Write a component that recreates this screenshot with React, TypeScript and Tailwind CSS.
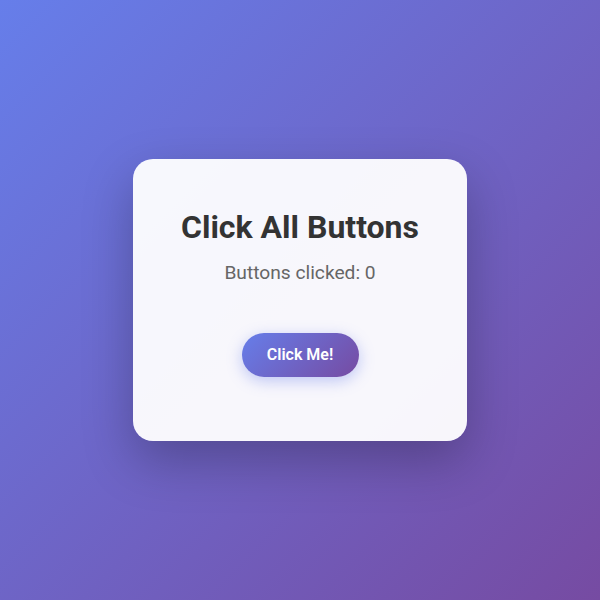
export default function App() {
  return (
    <div className="flex min-h-screen items-center justify-center bg-[linear-gradient(135deg,#667eea_0%,#764ba2_100%)] font-['Roboto',sans-serif]">
      <div className="flex w-[334px] flex-col items-center rounded-[20px] bg-white/95 px-10 pb-16 pt-[49px] text-center shadow-[0_20px_50px_rgba(0,0,0,0.25)]">
        <h1 className="text-[32px] font-bold leading-[38px] text-[#333]">Click All Buttons</h1>
        <p className="mt-[13px] text-[19.2px] leading-[28.8px] text-[#666]">Buttons clicked: 0</p>
        <button className="mt-[45px] h-[44px] w-[117px] rounded-full bg-[linear-gradient(135deg,#667eea_0%,#764ba2_100%)] text-[16px] font-semibold text-white shadow-[0_4px_15px_rgba(102,126,234,0.4)]">
          Click Me!
        </button>
      </div>
    </div>
  );
}
